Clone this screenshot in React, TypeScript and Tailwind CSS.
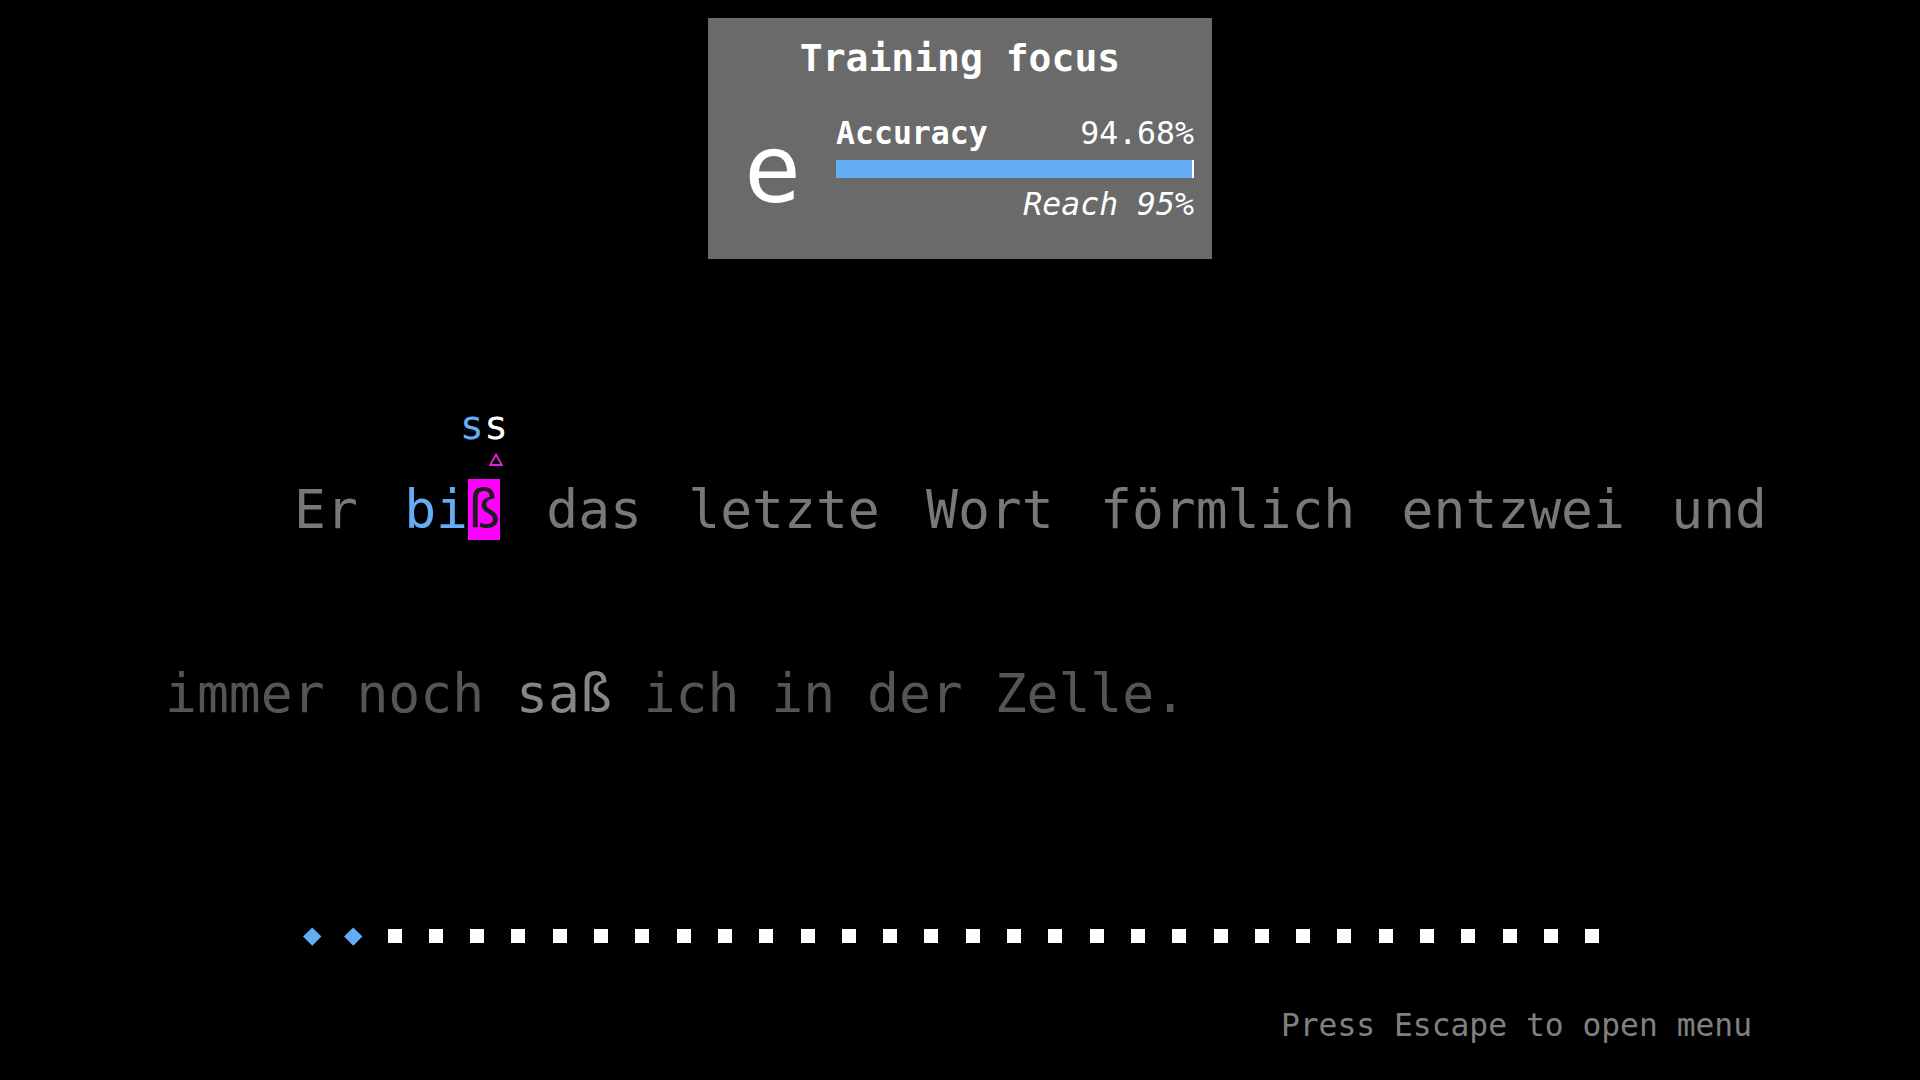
const font = "font-['DejaVu_Sans_Mono','Liberation_Mono',monospace]";

const done = 2;
const total = 32;

function FocusCard() {
  return (
    <div className="mx-auto mt-[18px] h-[241px] w-[504px] bg-[#6a6a6a] pt-[18px] text-white">
      <h1 className="text-center text-[38px] font-bold leading-[44px]">Training focus</h1>
      <div className="mt-[36px] flex items-center gap-[34px] pl-[36px] pr-[18px]">
        <div className="w-[58px] text-[95px] leading-[96px]">e</div>
        <div className="w-[358px]">
          <div className="flex items-baseline justify-between text-[31.5px] leading-[34px]">
            <span className="font-bold">Accuracy</span>
            <span>94.68%</span>
          </div>
          <div className="mt-[10px] flex h-[18px]">
            <div className="flex-1 bg-[#64adf5]" />
            <div className="w-[2px] bg-white" />
          </div>
          <div className="mt-[9px] text-right text-[31.5px] italic leading-[34px]">Reach 95%</div>
        </div>
      </div>
    </div>
  );
}

function Passage() {
  return (
    <p className="ml-[165px] mt-[159px] w-[1602px] indent-[129px] text-justify text-[53px] leading-[183.5px] text-[#787878]">
      Er <span className="text-[#64adf5]">bi</span>
      <span className="relative bg-[#ff00ff] text-[#1c1c1c]">
        ß
        <span className="absolute left-1/2 top-[-74px] -translate-x-1/2 indent-0 whitespace-nowrap text-[40px] leading-[40px]">
          <span className="text-[#64adf5]">s</span>
          <span className="text-white">s</span>
        </span>
        <svg className="absolute left-[21px] top-[-26px]" width="14" height="13" viewBox="0 0 14 13">
          <polygon points="7,1.5 12.8,12 1.2,12" fill="none" stroke="#e020e0" strokeWidth="1.8" />
        </svg>
      </span>{" "}
      das letzte Wort förmlich entzwei und{" "}
      <span className="text-[#555555]">
        immer noch <span className="text-[#868686]">saß</span> ich in der Zelle.
      </span>
    </p>
  );
}

function Progress() {
  return (
    <div className="ml-[305px] mt-[142px] flex h-[18px] items-center gap-[27.3px]">
      {Array.from({ length: total }).map((_, i) =>
        i < done ? (
          <div key={i} className="flex h-[14px] w-[14px] items-center justify-center">
            <div className="h-[12.5px] w-[12.5px] shrink-0 rotate-45 bg-[#64adf5]" />
          </div>
        ) : (
          <div key={i} className="h-[14px] w-[14px] bg-white" />
        )
      )}
    </div>
  );
}

export default function App() {
  return (
    <div className={`h-[1080px] w-full overflow-hidden bg-black ${font}`}>
      <FocusCard />
      <Passage />
      <Progress />
      <div className="mt-[62px] pr-[168px] text-right text-[31.3px] leading-[36px] text-[#808080]">
        Press Escape to open menu
      </div>
    </div>
  );
}
